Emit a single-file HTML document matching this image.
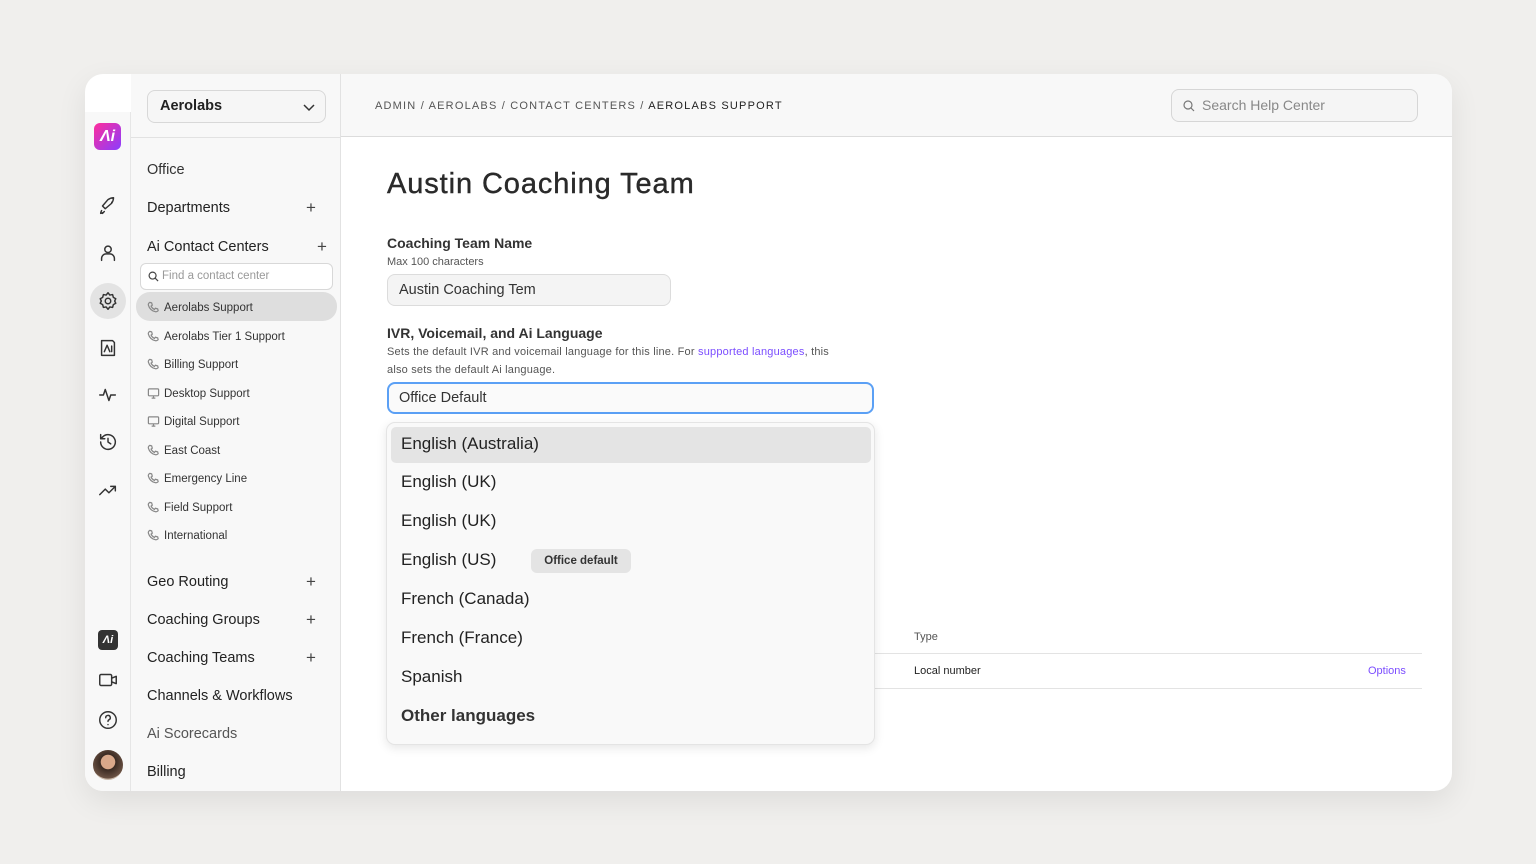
<!DOCTYPE html>
<html><head><meta charset="utf-8"><style>
*{box-sizing:border-box;margin:0;padding:0}
body{width:1536px;height:864px;background:#f0efed;font-family:"Liberation Sans",sans-serif;color:#222;position:relative;overflow:hidden}
.card{position:absolute;left:85px;top:74px;width:1367px;height:717px;border-radius:18px;background:#fff;overflow:hidden;box-shadow:0 10px 30px rgba(0,0,0,.08)}
.abs{position:absolute}
.rail{left:0;top:38px;width:46px;height:679px;background:#f8f8f8;border-right:1px solid #e6e6e6}
.side{left:46px;top:0;width:210px;height:717px;background:#f8f8f8;border-right:1px solid #e2e2e2}
.hdr{left:256px;top:0;width:1111px;height:63px;background:#f8f8f8;border-bottom:1px solid #dcdcdc}
.ic{position:absolute;left:12px;width:22px;height:22px}
.ic svg{width:22px;height:22px;fill:none;stroke:#333;stroke-width:1.6;stroke-linecap:round;stroke-linejoin:round}
.m{position:absolute;left:16px;font-size:14.5px;color:#222}
.plus{position:absolute;font-size:17px;color:#444;font-weight:300}
.sub{position:absolute;left:16px;font-size:11.5px;color:#333;display:flex;align-items:center;gap:4px}
.sub svg{width:13px;height:13px;fill:none;stroke:#888;stroke-width:1.3}
.opt{position:absolute;left:14px;font-size:17px;color:#222}
</style></head><body>
<div class="card">
 <div class="abs rail">
  <div class="abs" style="left:9px;top:11px;width:27px;height:27px;border-radius:6px;background:linear-gradient(135deg,#ff2d9b,#8a3dff);color:#fff;font-weight:bold;font-size:16px;text-align:center;line-height:27px;font-style:italic">Ʌi</div>
  <div class="ic" style="top:83px"><svg viewBox="0 0 24 24"><path d="M5 17c-1 2-1 3-1 3s1 0 3-1M9 15l-3-3 6-7c3-2 6-2 6-2s0 3-2 6l-7 6zM8 18l-2 2M16 8h0"/></svg></div>
  <div class="ic" style="top:130px"><svg viewBox="0 0 24 24"><circle cx="12" cy="8" r="3.5"/><path d="M5 20v-2a5 5 0 0 1 5-5h4a5 5 0 0 1 5 5v2"/></svg></div>
  <div class="abs" style="left:5px;top:171px;width:36px;height:36px;border-radius:18px;background:#e3e3e3"></div>
  <div class="ic" style="top:178px"><svg viewBox="0 0 24 24"><circle cx="12" cy="12" r="3"/><path d="M12 3l2 2.5 3-.5.8 3 2.7 1.5-1.2 2.5 1.2 2.5-2.7 1.5-.8 3-3-.5L12 21l-2-2.5-3 .5-.8-3L3.5 14.5 4.7 12 3.5 9.5 6.2 8 7 5l3 .5z"/></svg></div>
  <div class="ic" style="top:225px"><svg viewBox="0 0 24 24"><path d="M5 4h12l2 2v14H5zM8 16l3-7 3 7M16 10v6"/></svg></div>
  <div class="ic" style="top:272px"><svg viewBox="0 0 24 24"><path d="M3 12h4l2-6 4 12 2-6h5"/></svg></div>
  <div class="ic" style="top:319px"><svg viewBox="0 0 24 24"><path d="M4 12a8 8 0 1 0 2.5-5.8L4 8.5M4 4v4.5h4.5M12 8v4l3 2"/></svg></div>
  <div class="ic" style="top:367px"><svg viewBox="0 0 24 24"><path d="M3 17l6-6 4 4 7-7M15 8h5v5"/></svg></div>
  <div class="abs" style="left:13px;top:518px;width:20px;height:20px;border-radius:4px;background:#333;color:#fff;font-size:11px;font-weight:bold;text-align:center;line-height:20px;font-style:italic">Ʌi</div>
  <div class="ic" style="top:557px"><svg viewBox="0 0 24 24"><rect x="3" y="6" width="13" height="12" rx="1.5"/><path d="M16 10l5-2v8l-5-2"/></svg></div>
  <div class="ic" style="top:597px"><svg viewBox="0 0 24 24"><circle cx="12" cy="12" r="9"/><path d="M9.5 9.5a2.5 2.5 0 1 1 3.5 2.3c-.7.4-1 1-1 1.7M12 17h0"/></svg></div>
  <div class="abs" style="left:8px;top:638px;width:30px;height:30px;border-radius:15px;background:radial-gradient(circle at 50% 40%,#d9a88a 0 30%,#3a2a22 32%,#6b5244 70%,#c9b8a8 72%)"></div>
 </div>
 <div class="abs side">
  <div class="abs" style="left:16px;top:16px;width:179px;height:33px;border:1px solid #d8d8d8;border-radius:8px;background:#f6f6f6;font-size:14.5px;font-weight:bold;line-height:31px;padding-left:12px;color:#222">Aerolabs<svg style="position:absolute;right:10px;top:11px" width="12" height="10" viewBox="0 0 12 10"><path d="M1 3l5 5 5-5" fill="none" stroke="#333" stroke-width="1.5"/></svg></div>
  <div class="abs" style="left:0;top:63px;width:210px;border-top:1px solid #e2e2e2"></div>
  <div class="m" style="top:88px;color:#333">Office</div>
  <div class="m" style="top:126px">Departments</div><div class="plus" style="left:175px;top:124px">+</div>
  <div class="m" style="top:165px">Ai Contact Centers</div><div class="plus" style="left:186px;top:163px">+</div>
  <div class="abs" style="left:9px;top:189px;width:193px;height:27px;border:1px solid #d8d8d8;border-radius:6px;background:#fff;font-size:11.5px;color:#999;line-height:25px;padding-left:21px"><svg style="position:absolute;left:7px;top:7px" width="11" height="11" viewBox="0 0 12 12"><circle cx="5" cy="5" r="3.8" fill="none" stroke="#444" stroke-width="1.3"/><path d="M8 8l3 3" stroke="#444" stroke-width="1.3"/></svg>Find a contact center</div>
  <div class="abs" style="left:5px;top:218px;width:201px;height:29px;border-radius:14px;background:#dedede"></div>
  <div class="sub" style="top:227px"><svg viewBox="0 0 14 14"><path d="M3 1.5l2 .5.7 2.5-1.3 1a7 7 0 0 0 3.6 3.6l1-1.3 2.5.7.5 2c-1 1-2 1.3-3 1A10 10 0 0 1 1.5 4.5c-.3-1 0-2 1.5-3z"/></svg>Aerolabs Support</div>
  <div class="sub" style="top:256px"><svg viewBox="0 0 14 14"><path d="M3 1.5l2 .5.7 2.5-1.3 1a7 7 0 0 0 3.6 3.6l1-1.3 2.5.7.5 2c-1 1-2 1.3-3 1A10 10 0 0 1 1.5 4.5c-.3-1 0-2 1.5-3z"/></svg>Aerolabs Tier 1 Support</div>
  <div class="sub" style="top:284px"><svg viewBox="0 0 14 14"><path d="M3 1.5l2 .5.7 2.5-1.3 1a7 7 0 0 0 3.6 3.6l1-1.3 2.5.7.5 2c-1 1-2 1.3-3 1A10 10 0 0 1 1.5 4.5c-.3-1 0-2 1.5-3z"/></svg>Billing Support</div>
  <div class="sub" style="top:313px"><svg viewBox="0 0 14 14"><rect x="1.5" y="2" width="11" height="7.5" rx="1"/><path d="M5 12h4M7 9.5V12"/></svg>Desktop Support</div>
  <div class="sub" style="top:341px"><svg viewBox="0 0 14 14"><rect x="1.5" y="2" width="11" height="7.5" rx="1"/><path d="M5 12h4M7 9.5V12"/></svg>Digital Support</div>
  <div class="sub" style="top:370px"><svg viewBox="0 0 14 14"><path d="M3 1.5l2 .5.7 2.5-1.3 1a7 7 0 0 0 3.6 3.6l1-1.3 2.5.7.5 2c-1 1-2 1.3-3 1A10 10 0 0 1 1.5 4.5c-.3-1 0-2 1.5-3z"/></svg>East Coast</div>
  <div class="sub" style="top:398px"><svg viewBox="0 0 14 14"><path d="M3 1.5l2 .5.7 2.5-1.3 1a7 7 0 0 0 3.6 3.6l1-1.3 2.5.7.5 2c-1 1-2 1.3-3 1A10 10 0 0 1 1.5 4.5c-.3-1 0-2 1.5-3z"/></svg>Emergency Line</div>
  <div class="sub" style="top:427px"><svg viewBox="0 0 14 14"><path d="M3 1.5l2 .5.7 2.5-1.3 1a7 7 0 0 0 3.6 3.6l1-1.3 2.5.7.5 2c-1 1-2 1.3-3 1A10 10 0 0 1 1.5 4.5c-.3-1 0-2 1.5-3z"/></svg>Field Support</div>
  <div class="sub" style="top:455px"><svg viewBox="0 0 14 14"><path d="M3 1.5l2 .5.7 2.5-1.3 1a7 7 0 0 0 3.6 3.6l1-1.3 2.5.7.5 2c-1 1-2 1.3-3 1A10 10 0 0 1 1.5 4.5c-.3-1 0-2 1.5-3z"/></svg>International</div>
  <div class="m" style="top:500px">Geo Routing</div><div class="plus" style="left:175px;top:498px">+</div>
  <div class="m" style="top:538px">Coaching Groups</div><div class="plus" style="left:175px;top:536px">+</div>
  <div class="m" style="top:576px">Coaching Teams</div><div class="plus" style="left:175px;top:574px">+</div>
  <div class="m" style="top:614px">Channels &amp; Workflows</div>
  <div class="m" style="top:652px;color:#555">Ai Scorecards</div>
  <div class="m" style="top:690px">Billing</div>
 </div>
 <div class="abs hdr">
  <div class="abs" style="left:34px;top:26px;font-size:11px;letter-spacing:1.2px;color:#555">ADMIN / AEROLABS / CONTACT CENTERS / <span style="color:#222">AEROLABS SUPPORT</span></div>
  <div class="abs" style="left:830px;top:15px;width:247px;height:33px;border:1px solid #d6d6d6;border-radius:8px;background:#f5f5f5;font-size:14px;color:#888;line-height:31px;padding-left:30px"><svg style="position:absolute;left:11px;top:10px" width="12" height="12" viewBox="0 0 12 12"><circle cx="5" cy="5" r="4" fill="none" stroke="#777" stroke-width="1.2"/><path d="M8 8l3 3" stroke="#777" stroke-width="1.2"/></svg>Search Help Center</div>
 </div>
 <div class="abs" style="left:302px;top:94px;font-size:29px;color:#2a2a2a;letter-spacing:0.9px;-webkit-text-stroke:0.4px #2a2a2a">Austin Coaching Team</div>
 <div class="abs" style="left:302px;top:161px;font-size:14px;font-weight:bold;color:#333">Coaching Team Name</div>
 <div class="abs" style="left:302px;top:182px;font-size:11px;color:#555">Max 100 characters</div>
 <div class="abs" style="left:302px;top:200px;width:284px;height:32px;border:1px solid #dcdcdc;border-radius:8px;background:#f4f4f4;font-size:14.5px;line-height:30px;padding-left:11px;color:#333">Austin Coaching Tem</div>
 <div class="abs" style="left:302px;top:251px;font-size:14px;font-weight:bold;color:#333">IVR, Voicemail, and Ai Language</div>
 <div class="abs" style="left:302px;top:269px;font-size:11px;color:#555;line-height:18px;width:455px;letter-spacing:0.2px">Sets the default IVR and voicemail language for this line. For <span style="color:#7b4dff">supported languages</span>, this also sets the default Ai language.</div>
 <div class="abs" style="left:302px;top:308px;width:487px;height:32px;border:2px solid #5ba0f5;border-radius:8px;background:#fafafa;font-size:14.5px;line-height:28px;padding-left:10px;color:#333">Office Default</div>
 <div class="abs" style="left:829px;top:557px;font-size:11px;color:#555">Type</div>
 <div class="abs" style="left:789px;top:579px;width:548px;border-top:1px solid #e3e3e3"></div>
 <div class="abs" style="left:829px;top:591px;font-size:11px;color:#222">Local number</div>
 <div class="abs" style="left:1283px;top:591px;font-size:11px;color:#7b4dff">Options</div>
 <div class="abs" style="left:789px;top:614px;width:548px;border-top:1px solid #e3e3e3"></div>
 <div class="abs" style="left:301px;top:348px;width:489px;height:323px;border:1px solid #e4e4e4;border-radius:9px;background:#f9f9f9;box-shadow:0 3px 10px rgba(0,0,0,.1)">
  <div class="abs" style="left:4px;top:4px;width:480px;height:36px;border-radius:5px;background:#e4e4e4"></div>
  <div class="opt" style="top:11px">English (Australia)</div>
  <div class="opt" style="top:49px">English (UK)</div>
  <div class="opt" style="top:88px">English (UK)</div>
  <div class="opt" style="top:127px">English (US)</div>
  <div class="abs" style="left:144px;top:126px;width:100px;height:24px;border-radius:6px;background:#e4e4e4;font-size:11.5px;font-weight:bold;text-align:center;line-height:24px;color:#333">Office default</div>
  <div class="opt" style="top:166px">French (Canada)</div>
  <div class="opt" style="top:205px">French (France)</div>
  <div class="opt" style="top:244px">Spanish</div>
  <div class="opt" style="top:283px;font-weight:bold;color:#333">Other languages</div>
 </div>
</div>
</body></html>
